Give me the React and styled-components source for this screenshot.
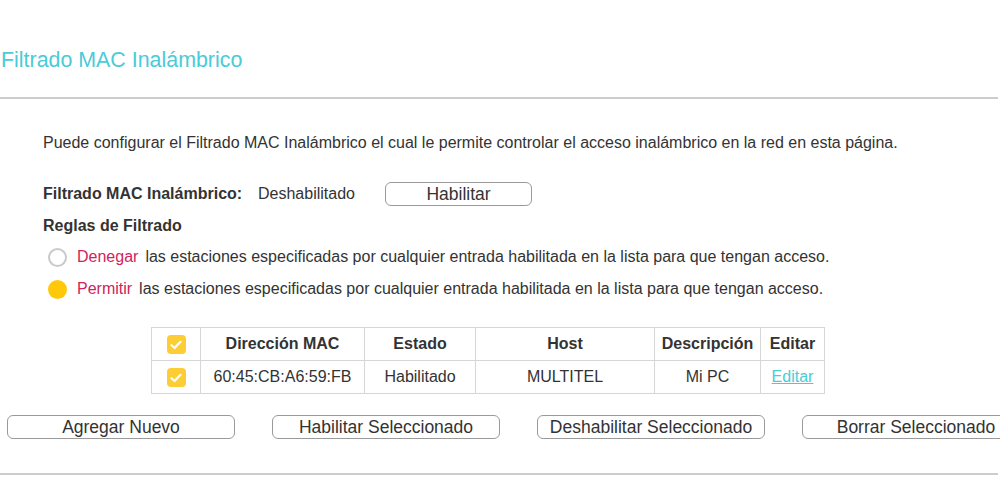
import React from "react";
import styled, { createGlobalStyle } from "styled-components";

const GlobalStyle = createGlobalStyle`
  html, body {
    margin: 0;
    padding: 0;
    background: #fff;
    overflow: hidden;
  }
  body {
    font-family: "Liberation Sans", Arial, sans-serif;
    color: #333;
  }
`;

const Page = styled.div`
  width: 1000px;
  height: 488px;
  overflow: hidden;
`;

const Title = styled.h2`
  margin: 0;
  padding: 48px 0 0 1px;
  font-size: 21.4px;
  line-height: 24px;
  font-weight: normal;
  color: #4acbd6;
`;

const Divider = styled.div`
  width: 998px;
  height: 2px;
  background: #cdcdcd;
  margin-top: ${(p) => p.$top}px;
`;

const Content = styled.div`
  padding-left: 43px;
  font-size: 16px;
  line-height: 20px;
`;

const Intro = styled.p`
  margin: 34px 0 0;
`;

const StatusRow = styled.div`
  margin-top: 29px;
  height: 24px;
  display: flex;
  align-items: center;

  .label {
    width: 215px;
    font-weight: bold;
  }
  .value {
    width: 127px;
  }
`;

const Button = styled.button`
  flex-shrink: 0;
  width: ${(p) => p.$width || 228}px;
  height: 24px;
  padding: 0;
  background: #fff;
  border: 1px solid #9a9a9a;
  border-radius: 6px;
  font-family: "Liberation Sans", Arial, sans-serif;
  font-size: 17.5px;
  line-height: 22px;
  color: #333;
  text-align: center;
  cursor: pointer;
`;

const RulesTitle = styled.div`
  margin-top: 10px;
  font-weight: bold;
`;

const RadioRow = styled.div`
  margin-top: ${(p) => p.$top}px;
  height: 20px;
  display: flex;
  align-items: center;
  gap: 10px;
  padding-left: 5px;

  .key {
    color: #d0245a;
    margin-right: 7px;
  }
`;

const Radio = styled.span`
  box-sizing: border-box;
  width: 19px;
  height: 19px;
  border-radius: 50%;
  flex-shrink: 0;
  border: ${(p) => (p.$checked ? "none" : "2px solid #cacaca")};
  background: ${(p) => (p.$checked ? "#ffc808" : "#fff")};
`;

const Table = styled.table`
  margin: 28px 0 0 108px;
  border-collapse: collapse;
  table-layout: fixed;
  width: 674px;

  th,
  td {
    border: 1px solid #d6d6d6;
    height: 32px;
    padding: 0;
    text-align: center;
    vertical-align: middle;
  }
  th {
    font-weight: bold;
  }
  a {
    color: #4acbd6;
    text-decoration: underline;
  }
`;

const Check = styled.span`
  display: inline-flex;
  align-items: center;
  justify-content: center;
  width: 19px;
  height: 19px;
  border-radius: 4px;
  background: #fdcd35;
  vertical-align: middle;
`;

const ButtonBar = styled.div`
  margin-top: 21px;
  padding-left: 7px;
  display: flex;
  gap: 37px;
`;

function CheckBox() {
  return (
    <Check>
      <svg width="12" height="10" viewBox="0 0 12 10">
        <path
          d="M1.5 5.2 L4.6 8 L10.5 1.8"
          fill="none"
          stroke="#fff"
          strokeWidth="2.2"
          strokeLinecap="round"
          strokeLinejoin="round"
        />
      </svg>
    </Check>
  );
}

const rows = [
  { mac: "60:45:CB:A6:59:FB", status: "Habilitado", host: "MULTITEL", desc: "Mi PC" },
];

export default function App() {
  return (
    <Page>
      <GlobalStyle />
      <Title>Filtrado MAC Inalámbrico</Title>
      <Divider $top={25} />
      <Content>
        <Intro>
          Puede configurar el Filtrado MAC Inalámbrico el cual le permite controlar el
          acceso inalámbrico en la red en esta página.
        </Intro>
        <StatusRow>
          <span className="label">Filtrado MAC Inalámbrico:</span>
          <span className="value">Deshabilitado</span>
          <Button $width={147}>Habilitar</Button>
        </StatusRow>
        <RulesTitle>Reglas de Filtrado</RulesTitle>
        <RadioRow $top={11}>
          <Radio />
          <span>
            <span className="key">Denegar</span>las estaciones especificadas por cualquier
            entrada habilitada en la lista para que tengan acceso.
          </span>
        </RadioRow>
        <RadioRow $top={12}>
          <Radio $checked />
          <span>
            <span className="key">Permitir</span>las estaciones especificadas por cualquier
            entrada habilitada en la lista para que tengan acceso.
          </span>
        </RadioRow>
        <Table>
          <colgroup>
            <col style={{ width: 49 }} />
            <col style={{ width: 164 }} />
            <col style={{ width: 111 }} />
            <col style={{ width: 179 }} />
            <col style={{ width: 106 }} />
            <col style={{ width: 64 }} />
          </colgroup>
          <thead>
            <tr>
              <th>
                <CheckBox />
              </th>
              <th>Dirección MAC</th>
              <th>Estado</th>
              <th>Host</th>
              <th>Descripción</th>
              <th>Editar</th>
            </tr>
          </thead>
          <tbody>
            {rows.map((r) => (
              <tr key={r.mac}>
                <td>
                  <CheckBox />
                </td>
                <td>{r.mac}</td>
                <td>{r.status}</td>
                <td>{r.host}</td>
                <td>{r.desc}</td>
                <td>
                  <a href="#">Editar</a>
                </td>
              </tr>
            ))}
          </tbody>
        </Table>
      </Content>
      <ButtonBar>
        <Button>Agregar Nuevo</Button>
        <Button>Habilitar Seleccionado</Button>
        <Button>Deshabilitar Seleccionado</Button>
        <Button>Borrar Seleccionado</Button>
      </ButtonBar>
      <Divider $top={34} />
    </Page>
  );
}
